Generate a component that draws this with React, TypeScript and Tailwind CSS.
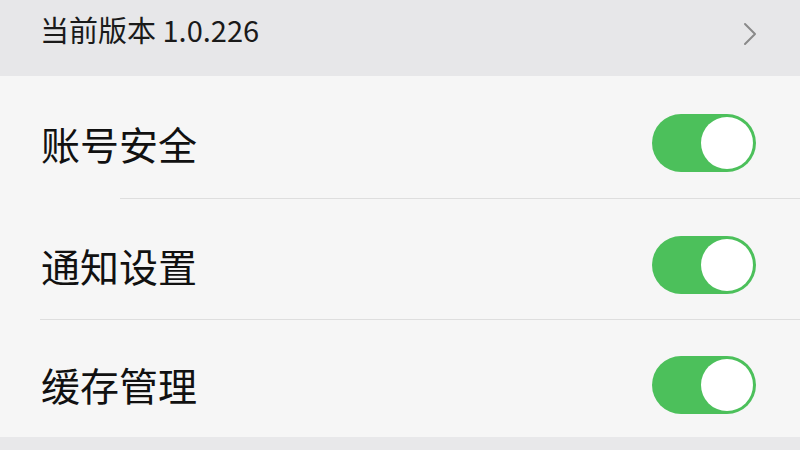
import React, { useState } from "react";
import { ChevronRight } from "lucide-react";

const font = { fontFamily: '"Noto Sans CJK SC", "Noto Sans", sans-serif' };

function Toggle({ on, onChange }: { on: boolean; onChange: () => void }) {
  return (
    <button
      onClick={onChange}
      className={`w-[104px] h-[58px] rounded-full p-[3px] flex items-center ${
        on ? "bg-[#4cc05b] justify-end" : "bg-[#e4e4e4] justify-start"
      }`}
    >
      <span className="w-[52px] h-[52px] rounded-full bg-white block" />
    </button>
  );
}

export default function App() {
  const [items, setItems] = useState([
    { label: "账号安全", on: true, h: "h-[123px]", line: "ml-[120px]" },
    { label: "通知设置", on: true, h: "h-[121px]", line: "ml-[40px]" },
    { label: "缓存管理", on: true, h: "h-[117px]", line: "" },
  ]);

  const toggle = (i: number) =>
    setItems((prev) => prev.map((it, j) => (j === i ? { ...it, on: !it.on } : it)));

  return (
    <div className="w-[800px] h-[450px] overflow-hidden bg-[#e8e8ea] flex flex-col" style={font}>
      <div className="h-[76px] shrink-0 flex items-center justify-between pl-[40px] pr-[30px] pb-[18px] bg-[#e7e7e9]">
        <span className="text-[29px] leading-none text-[#1a1a1a]">当前版本 1.0.226</span>
        <ChevronRight className="w-[40px] h-[40px] mt-[10px] text-[#8a8a8a]" strokeWidth={1.2} />
      </div>
      <div className="shrink-0 bg-[#f6f6f6] flex flex-col">
        {items.map((it, i) => (
          <div key={it.label} className={`${it.h} flex flex-col`}>
            <div className="flex-1 flex items-center justify-between pt-[12px] pl-[41px] pr-[44px]">
              <span className="text-[39px] leading-none text-[#111]">{it.label}</span>
              <Toggle on={it.on} onChange={() => toggle(i)} />
            </div>
            {it.line && <div className={`h-px bg-[#dedede] ${it.line}`} />}
          </div>
        ))}
      </div>
    </div>
  );
}
